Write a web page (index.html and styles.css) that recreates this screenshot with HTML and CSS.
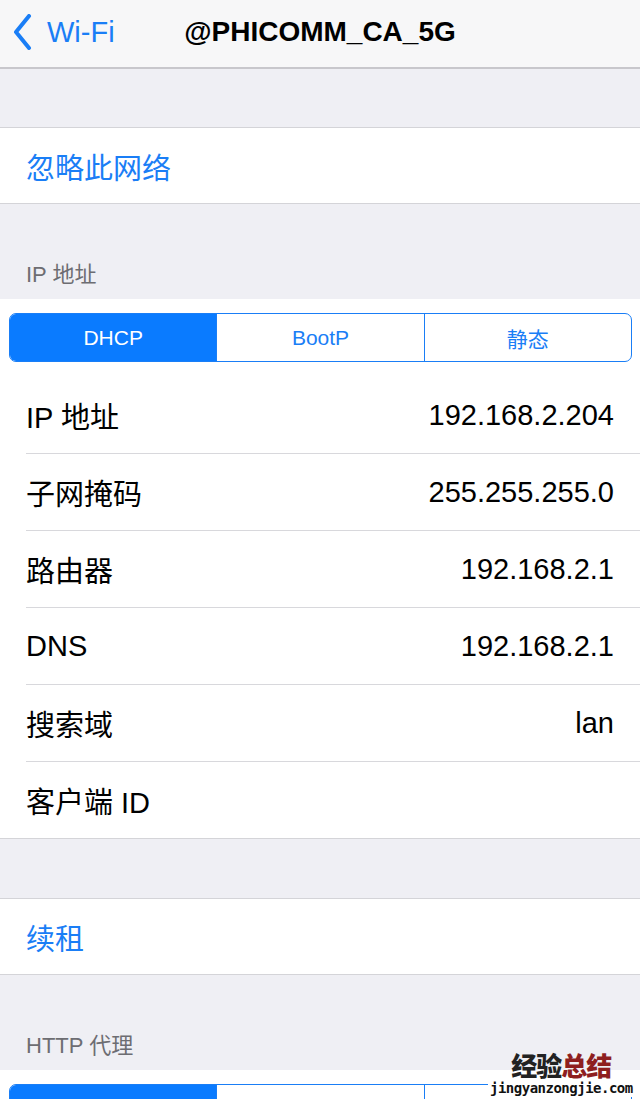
FILE: index.html
```html
<!DOCTYPE html>
<html lang="zh-CN">
<head>
<meta charset="utf-8">
<title>@PHICOMM_CA_5G</title>
<link rel="stylesheet" href="styles.css">
</head>
<body>
<div class="page">
  <header class="nav">
    <a class="back">
      <svg class="chev" width="20" height="36" viewBox="0 0 20 36"><path d="M16 2 L3 18 L16 34" fill="none" stroke="#1a7ef6" stroke-width="4" stroke-linecap="round" stroke-linejoin="round"/></svg>
      <span>Wi-Fi</span>
    </a>
    <h1 class="title">@PHICOMM_CA_5G</h1>
  </header>

  <div class="spacer s1"></div>
  <div class="group">
    <div class="cell action">忽略此网络</div>
  </div>

  <div class="section-head">IP 地址</div>
  <div class="group pad">
    <div class="seg">
      <div class="seg-item on">DHCP</div>
      <div class="seg-item">BootP</div>
      <div class="seg-item">静态</div>
    </div>
    <div class="rows">
      <div class="row"><span>IP 地址</span><span>192.168.2.204</span></div>
      <div class="row"><span>子网掩码</span><span>255.255.255.0</span></div>
      <div class="row"><span>路由器</span><span>192.168.2.1</span></div>
      <div class="row"><span>DNS</span><span>192.168.2.1</span></div>
      <div class="row"><span>搜索域</span><span>lan</span></div>
      <div class="row"><span>客户端 ID</span><span></span></div>
    </div>
  </div>

  <div class="spacer s2"></div>
  <div class="group">
    <div class="cell action">续租</div>
  </div>

  <div class="section-head">HTTP 代理</div>
  <div class="group pad last">
    <div class="seg">
      <div class="seg-item on"></div>
      <div class="seg-item"></div>
      <div class="seg-item"></div>
    </div>
  </div>

  <div class="watermark">
    <div class="wm-cn"><span class="wm-a">经验</span><span class="wm-b">总结</span></div>
    <div class="wm-url">jingyanzongjie.com</div>
  </div>
</div>
</body>
</html>
```

FILE: styles.css
```css
html, body {
  margin: 0;
  padding: 0;
}
body {
  background: #efeff4;
  font-family: "Liberation Sans", "Noto Sans CJK SC", sans-serif;
  color: #000;
  overflow: hidden;
}
.page {
  position: relative;
  width: 640px;
  height: 1099px;
  overflow: hidden;
}
.nav {
  position: relative;
  height: 67px;
  background: #f7f7f8;
  border-bottom: 2px solid #c8c7cc;
  display: flex;
  align-items: center;
  justify-content: center;
}
.back {
  position: absolute;
  left: 13px;
  top: 14px;
  display: flex;
  align-items: center;
  gap: 14px;
  color: #1a7ef6;
  font-size: 29px;
}
.back span {
  margin-top: 0;
}
.title {
  margin: 0 0 4px 0;
  font-size: 28px;
  font-weight: bold;
}
.spacer.s1 {
  height: 58px;
}
.spacer.s2 {
  height: 59px;
}
.group {
  background: #fff;
  border-top: 1px solid #d4d4d8;
  border-bottom: 1px solid #d4d4d8;
}
.group.pad {
  border-top: none;
  padding-top: 14px;
}
.group.last {
  border-bottom: none;
  height: 100px;
}
.cell {
  height: 75px;
  display: flex;
  align-items: center;
  padding-left: 26px;
  font-size: 29px;
}
.action {
  color: #1a7ef6;
}
.section-head {
  height: 95px;
  box-sizing: border-box;
  display: flex;
  align-items: flex-end;
  padding: 0 26px 12px;
  font-size: 22px;
  line-height: 24px;
  color: #6d6d72;
}
.seg {
  margin: 0 8px 0 9px;
  height: 49px;
  box-sizing: border-box;
  border: 1.5px solid #1a7ef6;
  border-radius: 7px;
  display: flex;
  overflow: hidden;
}
.seg-item {
  flex: 1;
  display: flex;
  align-items: center;
  justify-content: center;
  font-size: 21px;
  color: #1a7ef6;
  border-left: 1.5px solid #1a7ef6;
}
.seg-item:first-child {
  border-left: none;
}
.seg-item.on {
  background: #0a7bff;
  color: #fff;
}
.rows {
  margin-top: 15px;
}
.row {
  height: 76px;
  margin-left: 26px;
  padding-right: 26px;
  display: flex;
  align-items: center;
  justify-content: space-between;
  font-size: 29px;
  border-bottom: 1px solid #d8d8dc;
}
.row:last-child {
  border-bottom: none;
}
.watermark {
  position: absolute;
  left: 488px;
  top: 1051px;
  display: flex;
  flex-direction: column;
  align-items: center;
}
.wm-cn {
  font-family: "Noto Sans CJK SC", sans-serif;
  font-weight: 900;
  font-size: 26px;
  line-height: 28px;
  letter-spacing: -1px;
}
.wm-a {
  color: #222;
}
.wm-b {
  color: #8e1f1f;
}
.wm-url {
  background: #fff;
  font-family: "DejaVu Sans Mono", monospace;
  font-weight: bold;
  font-size: 14px;
  line-height: 18px;
  letter-spacing: -0.5px;
  color: #111;
  padding: 0 2px;
}
```
